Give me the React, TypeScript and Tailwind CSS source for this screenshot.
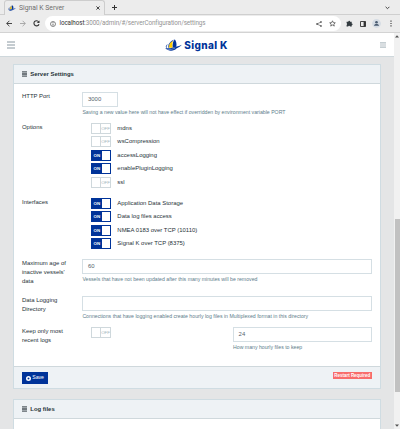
import type { ReactNode } from "react";

const ARIAL = "font-['Liberation_Sans',Arial,sans-serif]";

function Toggle({ on }: { on?: boolean }) {
  return on ? (
    <span className="flex h-[11px] w-[20.6px] shrink-0 items-center justify-between border border-[#003399] bg-[#003399]">
      <span className="w-[10px] text-center text-[4.4px] leading-[9px] font-bold text-white">ON</span>
      <span className="h-full w-[8px] bg-white" />
    </span>
  ) : (
    <span className="flex h-[11px] w-[20.6px] shrink-0 items-center border border-[#cfd8dc] bg-white">
      <span className="h-full w-[9px] border-r border-[#cfd8dc]" />
      <span className="flex-1 text-center text-[4.4px] leading-[9px] text-[#a5b4bc]">OFF</span>
    </span>
  );
}

function ToggleRow({ label, on }: { label: string; on?: boolean }) {
  return (
    <div className="flex h-[13.6px] items-center pl-[8.4px]">
      <Toggle on={on} />
      <span className="ml-[6px] whitespace-nowrap">{label}</span>
    </div>
  );
}

function Row({ label, height, children }: { label: ReactNode; height: string; children: ReactNode }) {
  return (
    <div className={`flex ${height}`}>
      <div className="w-[60.4px] shrink-0 whitespace-nowrap">{label}</div>
      <div className="min-w-0 flex-1">{children}</div>
    </div>
  );
}

function Field({ value, help, width }: { value: string; help: string; width: string }) {
  return (
    <div className={width}>
      <div className="flex h-[15px] items-center border border-[#d5dfe4] bg-white pl-[4.6px] text-[#54636b]">{value}</div>
      <div className="mt-[2px] h-[7px] text-[5.2px] leading-[7px] whitespace-nowrap text-[#607d8b]">{help}</div>
    </div>
  );
}

function ListIcon() {
  return (
    <svg className="h-[6px] w-[5.5px]" viewBox="0 0 6 6">
      <path d="M0 .6h6M0 2.2h6M0 3.8h6M0 5.4h6" stroke="#2b363c" strokeWidth=".9" />
    </svg>
  );
}

function CardHeader({ title }: { title: string }) {
  return (
    <div className="flex h-[19px] items-center gap-[2.8px] border-b border-[#cfd8dc] bg-[#eef2f5] pl-[8.4px] text-[5.95px] font-bold text-[#263238]">
      <ListIcon />
      {title}
    </div>
  );
}

function Browser() {
  return (
    <div className="h-[33px] border-b border-[#d3d3d3] bg-[#ececec] font-[Roboto,sans-serif]">
      <div className="flex h-[15px] border-b border-[#cfcfcf] pl-[4px]">
        <div className="flex h-[15px] w-[101px] items-center rounded-t-[3px] border-x border-t border-[#cdcdcd] bg-[#ececec] pl-[3px]">
          <Boat className="h-[6px] w-[8px]" />
          <span className="ml-[3px] text-[6.8px] text-[#6c6c6c]">Signal K Server</span>
          <svg className="mr-[4px] ml-auto h-[4px] w-[4px]" viewBox="0 0 4 4">
            <path d="M.4.4l3.2 3.2M3.6.4L.4 3.6" stroke="#333" strokeWidth=".9" />
          </svg>
        </div>
        <svg className="mt-[5px] ml-[7px] h-[5px] w-[5px]" viewBox="0 0 5 5">
          <path d="M2.5 0v5M0 2.5h5" stroke="#333" />
        </svg>
        <svg className="mt-[5.5px] mr-[10px] ml-auto h-[4px] w-[5px]" viewBox="0 0 5 4">
          <path d="M.6.8l1.9 1.9L4.4.8" fill="none" stroke="#444" />
        </svg>
      </div>
      <div className="flex h-[17px] items-center pl-[6px]">
        <svg className="h-[7px] w-[6px]" viewBox="0 0 6 7">
          <path d="M6 3.5H.8M3.4.8L.7 3.5l2.7 2.7" fill="none" stroke="#333" strokeWidth=".9" />
        </svg>
        <svg className="ml-[8px] h-[7px] w-[6px]" viewBox="0 0 6 7">
          <path d="M0 3.5h5.2M2.6.8l2.7 2.7-2.7 2.7" fill="none" stroke="#999" strokeWidth=".8" />
        </svg>
        <svg className="ml-[7px] h-[7px] w-[7px]" viewBox="0 0 7 7">
          <path d="M5.7 1.8A2.6 2.6 0 1 0 6 4.2" fill="none" stroke="#333" strokeWidth="1.1" />
          <path d="M6.5.4v2.7H3.8z" fill="#333" />
        </svg>
        <div className="ml-[5px] flex h-[15px] w-[295.5px] items-center rounded-full bg-white pr-[4.5px] pl-[5px]">
          <svg className="h-[6px] w-[6px]" viewBox="0 0 6 6">
            <circle cx="3" cy="3" r="2.5" fill="none" stroke="#555" strokeWidth=".7" />
            <path d="M3 2.6v2M3 1.2v.8" stroke="#444" strokeWidth=".8" />
          </svg>
          <span className="ml-[3.5px] text-[6.3px] tracking-[-0.1px] whitespace-nowrap text-[#939393]">
            <span className="text-[#333]">localhost</span>:3000/admin/#/serverConfiguration/settings
          </span>
          <svg className="ml-auto h-[6px] w-[6px]" viewBox="0 0 6 6">
            <path d="M5 1L1 3l4 2" fill="none" stroke="#444" strokeWidth=".6" />
            <path d="M4.3.3h1.4v1.4H4.3zM.3 2.3h1.4v1.4H.3zM4.3 4.3h1.4v1.4H4.3z" fill="#444" />
          </svg>
          <svg className="ml-[7px] h-[7px] w-[7px]" viewBox="0 0 7 7">
            <path d="M3.5.8l.8 1.8 2 .2-1.5 1.3.5 2-1.8-1.1-1.8 1.1.5-2L.7 2.8l2-.2z" fill="none" stroke="#444" strokeWidth=".7" />
          </svg>
        </div>
        <svg className="ml-[5.5px] h-[7px] w-[7px]" viewBox="0 0 7 7">
          <path d="M.6 1.7h1.7a.9.9 0 1 1 1.8 0h1.6v1.7a.9.9 0 1 1 0 1.8v1.4H4a.9.9 0 0 0-1.8 0H.6V4.9a.9.9 0 0 0 0-1.6z" fill="#333b40" />
        </svg>
        <svg className="ml-[7px] h-[6px] w-[6px]" viewBox="0 0 6 6">
          <path d="M.5.5h5v5h-5z" fill="none" stroke="#333" strokeWidth=".9" />
          <path d="M3.6.5h2v5h-2z" fill="#333" />
        </svg>
        <svg className="ml-[6px] h-[9px] w-[9px]" viewBox="0 0 9 9">
          <circle cx="4.5" cy="4.5" r="4.4" fill="#d5dce4" />
          <circle cx="4.5" cy="3.2" r="1.3" fill="#495b70" />
          <path d="M2 6.7c0-2.4 5-2.4 5 0z" fill="#495b70" />
        </svg>
        <svg className="ml-[8.5px] h-[7px] w-[2px]" viewBox="0 0 2 7">
          <path d="M.4.6h1.2v1.2H.4zM.4 2.9h1.2v1.2H.4zM.4 5.2h1.2v1.2H.4z" fill="#444" />
        </svg>
      </div>
    </div>
  );
}

function Boat({ className }: { className: string }) {
  return (
    <svg className={className} viewBox="0 0 17 12">
      <path d="M7.6 8.6C7.2 5.4 7.8 2.4 9.8.2c1.5 2.2 2 4.700 1.500 7.600z" fill="#003399" />
      <path d="M3.700 8.800C3.500 6 4.900 3.200 8 1.800c-.9 2.300-.9 4.600-.4 6.900z" fill="#ffcc00" />
      <path d="M3.600 8.600C3.300 5.700 4.700 2.900 8.400 1.300" fill="none" stroke="#003399" strokeWidth=".8" />
      <path d="M2.200 5.600C1.300 6.700 1.100 7.700 1.500 8.700" fill="none" stroke="#003399" strokeWidth=".8" />
      <path d="M.2 9c4 .6 7.400-.1 10.800-1.300 2-.2 4-.8 5.900-1.900-1.700 2-3.700 2.800-5.500 3.600C9.300 11.900 3.700 13 .2 9z" fill="#003399" />
      <path d="M2.400 10.300c2.500.5 5.300 0 8-1.400" fill="none" stroke="#fff" strokeWidth=".4" />
    </svg>
  );
}

function Scrollbar() {
  return (
    <div className="flex w-[6px] flex-col items-center bg-[#f1f1f1]">
      <svg className="mt-[2px] h-[3px] w-[4px]" viewBox="0 0 4 3"><path d="M0 2.5h4L2 .3z" fill="#505050" /></svg>
      <div className="mt-[181px] h-[173px] w-[5px] bg-[#c1c1c1]" />
      <svg className="mt-auto mb-[2px] h-[3px] w-[4px]" viewBox="0 0 4 3"><path d="M0 .5h4L2 2.7z" fill="#505050" /></svg>
    </div>
  );
}

export default function App() {
  return (
    <div className={`flex h-[429px] w-[400px] flex-col overflow-hidden bg-[#e4e5e6] text-[5.95px] leading-[9px] text-[#263238] ${ARIAL}`}>
      <Browser />
      <div className="flex min-h-0 flex-1">
        <div className="min-w-0 flex-1 overflow-hidden">
          <header className="flex h-[24px] items-center justify-between border-b border-[#cfd8dc] bg-white pr-[8px] pl-[6.5px]">
            <svg className="h-[8px] w-[8px]" viewBox="0 0 8 8">
              <path d="M0 1h8M0 4h8M0 7h8" stroke="#7d8d96" strokeWidth=".9" />
            </svg>
            <div className="-ml-[2px] flex items-center">
              <Boat className="h-[12px] w-[17px]" />
              <span className="ml-[2.5px] font-[Inter,sans-serif] text-[10px] leading-none font-extrabold tracking-[0.4px] text-[#003399]">Signal K</span>
            </div>
            <svg className="h-[6px] w-[6px]" viewBox="0 0 6 6">
              <path d="M0 .8h6M0 3h6M0 5.2h6" stroke="#b3bec4" strokeWidth="1.2" />
            </svg>
          </header>
          <main className="pt-[7px] pr-[13px] pl-[12.6px]">
            <section className="h-[325px] border border-[#cfdce2] bg-white">
              <CardHeader title="Server Settings" />
              <div className="h-[282px] pt-[8.4px] pr-[8px] pl-[8.4px]">
                <Row label="HTTP Port" height="h-[30.6px]">
                  <Field value="3000" width="w-[36px]" help="Saving a new value here will not have effect if overridden by environment variable PORT" />
                </Row>
                <Row label="Options" height="h-[75px]">
                  <div className="-mt-[1.7px]">
                    <ToggleRow label="mdns" />
                    <ToggleRow label="wsCompression" />
                    <ToggleRow label="accessLogging" on />
                    <ToggleRow label="enablePluginLogging" on />
                    <ToggleRow label="ssl" />
                  </div>
                </Row>
                <Row label="Interfaces" height="h-[61px]">
                  <div className="-mt-[1.7px]">
                    <ToggleRow label="Application Data Storage" on />
                    <ToggleRow label="Data log files access" on />
                    <ToggleRow label="NMEA 0183 over TCP (10110)" on />
                    <ToggleRow label="Signal K over TCP (8375)" on />
                  </div>
                </Row>
                <Row label={<>Maximum age of<br />inactive vessels'<br />data</>} height="h-[37px]">
                  <Field value="60" width="w-full" help="Vessels that have not been updated after this many minutes will be removed" />
                </Row>
                <Row label={<>Data Logging<br />Directory</>} height="h-[31.3px]">
                  <Field value="" width="w-full" help="Connections that have logging enabled create hourly log files in Multiplexed format in this directory" />
                </Row>
                <Row label={<>Keep only most<br />recent logs</>} height="h-[30px]">
                  <div className="flex items-start justify-between">
                    <div className="pl-[8.4px]"><Toggle /></div>
                    <Field value="24" width="w-[139px]" help="How many hourly files to keep" />
                  </div>
                </Row>
              </div>
              <footer className="flex h-[22px] justify-between border-t border-[#cfd8dc] bg-[#eef2f5] pt-[5px] pr-[8px] pl-[8px]">
                <button className="flex h-[12px] w-[26.5px] items-center justify-center gap-[1.5px] bg-[#003399] text-[5.2px] leading-none text-white">
                  <svg className="h-[5px] w-[5px]" viewBox="0 0 5 5">
                    <circle cx="2.5" cy="2.5" r="1.75" fill="none" stroke="#fff" strokeWidth="1.5" />
                  </svg>
                  Save
                </button>
                <span className="flex h-[7px] w-[39.5px] items-center justify-center bg-[#f86c6b] text-[4.45px] leading-[7px] font-bold whitespace-nowrap text-white">Restart Required</span>
              </footer>
            </section>
            <section className="mt-[10px] h-[60px] border border-[#cfdce2] bg-white">
              <CardHeader title="Log files" />
            </section>
          </main>
        </div>
        <Scrollbar />
      </div>
    </div>
  );
}
